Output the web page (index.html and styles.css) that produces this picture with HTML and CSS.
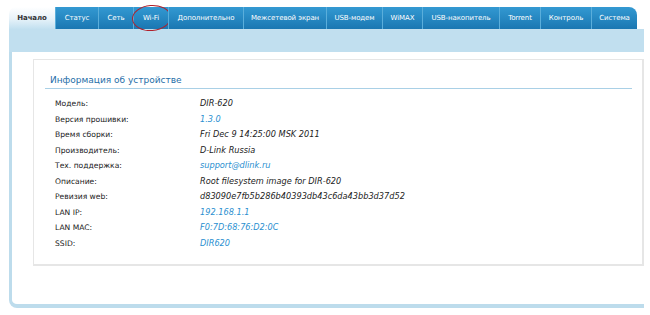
FILE: index.html
```html
<!DOCTYPE html>
<html lang="ru">
<head>
<meta charset="UTF-8">
<title>Информация об устройстве</title>
<link rel="stylesheet" href="styles.css">
</head>
<body>
<div class="frame">
    <ul class="tabs">
        <li class="tab active">Начало</li>
        <li class="tab">Статус</li>
        <li class="tab">Сеть</li>
        <li class="tab wifi">Wi-Fi<span class="mark"></span></li>
        <li class="tab">Дополнительно</li>
        <li class="tab">Межсетевой экран</li>
        <li class="tab">USB-модем</li>
        <li class="tab">WiMAX</li>
        <li class="tab">USB-накопитель</li>
        <li class="tab">Torrent</li>
        <li class="tab">Контроль</li>
        <li class="tab last">Система</li>
    </ul>
    <div class="band"></div>
    <div class="content">
        <div class="box">
            <h2 class="title">Информация об устройстве</h2>
            <div class="info">
                <div class="label">Модель:</div><div class="value">DIR-620</div>
                <div class="label">Версия прошивки:</div><div class="value link">1.3.0</div>
                <div class="label">Время сборки:</div><div class="value">Fri Dec 9 14:25:00 MSK 2011</div>
                <div class="label">Производитель:</div><div class="value">D-Link Russia</div>
                <div class="label">Тех. поддержка:</div><div class="value link">support@dlink.ru</div>
                <div class="label">Описание:</div><div class="value">Root filesystem image for DIR-620</div>
                <div class="label">Ревизия web:</div><div class="value">d83090e7fb5b286b40393db43c6da43bb3d37d52</div>
                <div class="label">LAN IP:</div><div class="value link">192.168.1.1</div>
                <div class="label">LAN MAC:</div><div class="value link">F0:7D:68:76:D2:0C</div>
                <div class="label">SSID:</div><div class="value link">DIR620</div>
            </div>
        </div>
    </div>
</div>
</body>
</html>
```

FILE: styles.css
```css
body {
    margin: 0;
    background: #fff;
    font-family: "DejaVu Sans", Verdana, sans-serif;
}
.frame {
    margin: 7px 6px 0 9px;
    width: 635px;
}
.tabs {
    display: grid;
    grid-template-columns: 46px 43px 35px 35px 75px 83px 56px 40px 77px 41px 51px 46px;
    list-style: none;
    margin: 0;
    padding: 0;
    height: 22px;
}
.tab {
    position: relative;
    height: 22px;
    line-height: 22px;
    font-size: 7px;
    letter-spacing: -0.1px;
    color: #fff;
    text-align: center;
    white-space: nowrap;
    background: linear-gradient(#3399d2, #1a77b2);
    border-left: 1px solid #5aaedb;
    box-sizing: border-box;
}
.tab.active {
    font-weight: bold;
    color: #333;
    background: linear-gradient(#ffffff, #e6f2f9 55%, #c2e0f0);
    border-left: none;
    border-top-left-radius: 7px;
}
.tab.last {
    border-top-right-radius: 8px;
}
.mark {
    position: absolute;
    left: -2px;
    top: -2px;
    width: 37px;
    height: 24px;
    border: 1.5px solid #b0202a;
    border-radius: 50%;
    transform: rotate(-4deg);
}
.band {
    height: 23px;
    background: #c1dfef;
}
.content {
    border-left: 3px solid #bddcec;
    border-bottom: 4px solid #bddcec;
    border-bottom-left-radius: 8px;
    padding: 7px 0 38px 21px;
}
.box {
    border: 1px solid #e6e6e6;
    border-right-width: 2px;
    border-bottom-width: 2px;
    padding: 15px 10px 14px 11px;
    height: 175px;
}
.title {
    margin: 0;
    padding: 0 0 3px 5px;
    font-size: 9px;
    font-weight: normal;
    color: #1f6ea8;
    border-bottom: 1px solid #a9d0e6;
}
.info {
    display: grid;
    grid-template-columns: 145px auto;
    padding: 7px 0 0 10px;
    font-size: 7.6px;
    line-height: 15.5px;
    color: #222;
}
.value {
    font-style: italic;
    font-size: 8.2px;
}
.link {
    color: #2a8fd0;
}
```
